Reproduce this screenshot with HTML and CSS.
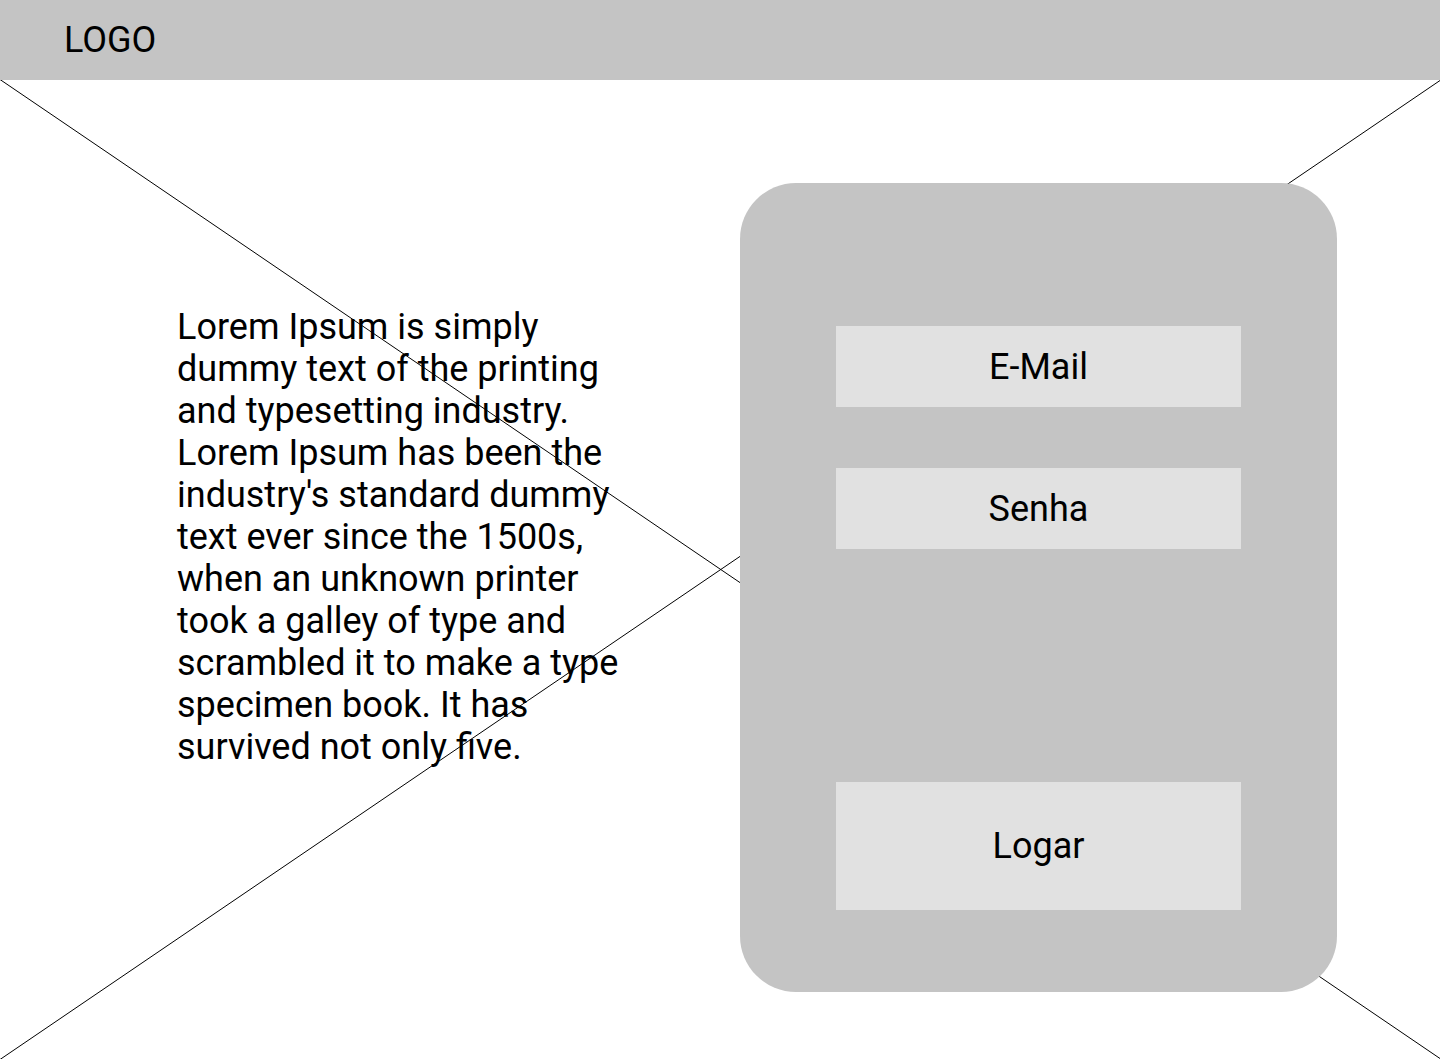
FILE: index.html
```html
<!DOCTYPE html>
<html lang="pt-BR">
<head>
  <meta charset="utf-8">
  <meta name="viewport" content="width=device-width, initial-scale=1">
  <title>Login</title>
  <link rel="stylesheet" href="styles.css">
</head>
<body>
  <header class="topbar"><a class="logo" href="#">LOGO</a></header>
  <main class="hero">
    <svg class="backdrop" viewBox="0 0 1440 979" preserveAspectRatio="none" aria-hidden="true">
      <path d="M0 -0.5L1440 978.5M0 979.5L1440 0.5"/>
    </svg>
    <p class="intro">Lorem Ipsum is simply dummy text of the printing and typesetting industry. Lorem Ipsum has been the industry's standard dummy text ever since the 1500s, when an unknown printer took a galley of type and scrambled it to make a type specimen book. It has survived not only five.</p>
    <form class="card">
      <input class="field" type="email" placeholder="E-Mail" aria-label="E-Mail">
      <input class="field" type="password" placeholder="Senha" aria-label="Senha">
      <button class="submit" type="button">Logar</button>
    </form>
  </main>
</body>
</html>
```
FILE: styles.css
```css
* {
  box-sizing: border-box;
}

body {
  display: flex;
  flex-direction: column;
  min-height: 100vh;
  margin: 0;
  background: #fff;
  color: #000;
  font-family: Roboto, sans-serif;
  font-size: 36px;
  line-height: 42px;
}

.topbar {
  display: flex;
  align-items: center;
  height: 80px;
  padding: 0 64px;
  background: #c4c4c4;
}

.logo {
  color: inherit;
  text-decoration: none;
}

.hero {
  position: relative;
  display: grid;
  grid-template-columns: 446fr 597fr;
  column-gap: 117px;
  flex: 1;
  align-items: center;
  padding: 103px 103px 67px 177px;
}

.backdrop {
  position: absolute;
  inset: 0;
  width: 100%;
  height: 100%;
  fill: none;
  stroke: #000;
  stroke-width: 1;
}

.intro {
  position: relative;
  margin: 0 0 102px;
}

.card {
  position: relative;
  display: flex;
  flex-direction: column;
  padding: 143px 96px 82px;
  border-radius: 56px;
  background: #c4c4c4;
}

.field,
.submit {
  width: 100%;
  padding: 0;
  border: 0;
  border-radius: 0;
  background: #e1e1e1;
  color: inherit;
  font: inherit;
  text-align: center;
}

.field {
  height: 81px;
  margin-bottom: 61px;
}

.field::placeholder {
  color: #000;
  opacity: 1;
}

.submit {
  height: 128px;
  margin-top: 172px;
}
```
